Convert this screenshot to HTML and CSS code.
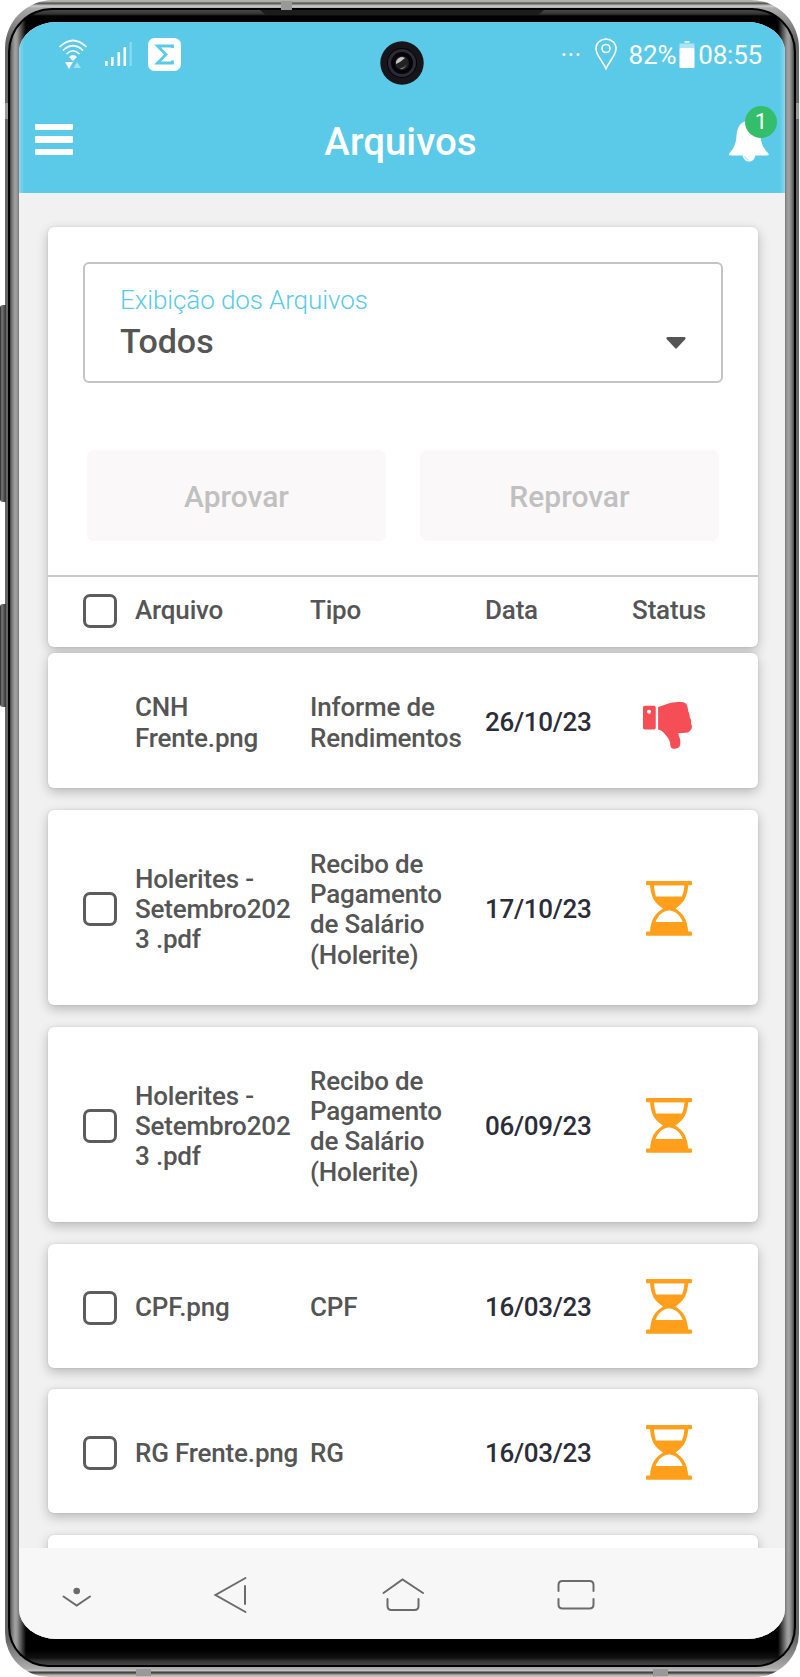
FILE: index.html
```html
<!DOCTYPE html>
<html lang="pt-BR">

<head>
    <meta charset="UTF-8">
    <meta name="viewport" content="width=device-width, initial-scale=1.0">
    <title>Arquivos</title>
    <link rel="stylesheet" href="styles.css">
</head>

<body>
    <!-- Shared icons -->
    <svg class="sprite" width="0" height="0">
        <symbol id="hourglass" viewBox="0 0 46 55">
            <rect x="0" y="0" width="46" height="4.3" rx="1" />
            <rect x="0" y="50.5" width="46" height="4.3" rx="1" />
            <path fill-rule="evenodd" d="M4 3C4.500 15 8 22 17 27.500C8 33 4.500 40 4 52H42.300C41.800 40 38 33 29.500 27.500C38 22 41.800 15 42.300 3ZM8 4.200H38.500Q38 11 36 15.500H10Q8.300 11 8 4.200ZM9.500 41C12 34.500 17 29.500 23 29.500C29 29.500 34.500 34.500 36.800 41Z" />
        </symbol>
        <symbol id="thumb-down" viewBox="0 0 146 140">
            <path fill-rule="evenodd" d="M5 11H33Q38 11 38 16V77Q38 82 33 82H5Q0 82 0 77V16Q0 11 5 11ZM18 23A6 6 0 1 0 18 35A6 6 0 1 0 18 23Z" />
            <path d="M45 15C65 9 78 2 96 1C107 0 120 -1 127 4C132 8 134 19 135 28C139 35 139 42 140 48C144 53 144 59 143 64C149 73 145 84 134 91C125 93 114 92 105 93C106 101 112 108 111 120C112 132 107 139 95 139C83 140 81 133 81 122C78 110 72 103 65 95C59 88 53 83 45 82Z" />
        </symbol>
    </svg>

    <div class="phone">
        <span class="side-btn volume"></span>
        <span class="side-btn power"></span>
        <span class="antenna antenna-top"></span>
        <span class="antenna antenna-left"></span>
        <span class="antenna antenna-right"></span>
        <span class="antenna antenna-bottom-left"></span>
        <span class="antenna antenna-bottom-right"></span>
        <div class="rim">
            <div class="bezel">
                <span class="speaker"></span>
                <div class="screen">
                    <header class="app-header">
                        <div class="status-bar">
                            <svg class="wifi" width="30" height="32" viewBox="0 0 30 32" fill="none" stroke="#fff" stroke-width="1.7">
                                <path d="M1.500 9Q15 -4 28.500 9M5 12.500Q15 3 25 12.500M8.500 16Q15 9.500 21.500 16" />
                                <path d="M11 19Q15 15 19 19L15 23Z" fill="#fff" stroke="none" />
                                <path d="M7 24H15L11 31Z" fill="#fff" stroke="none" />
                                <path d="M15.500 30H23L19 24Z" fill="#fff" stroke="none" opacity=".45" />
                            </svg>
                            <svg class="signal" width="30" height="27" viewBox="0 0 30 27" fill="#fff">
                                <rect x="1" y="20" width="2.600" height="5" />
                                <rect x="7" y="16" width="2.600" height="9" />
                                <rect x="13.500" y="11" width="2.600" height="14" />
                                <rect x="19.500" y="6" width="2.600" height="19" />
                                <rect x="25.500" y="1" width="2.300" height="24" opacity=".3" />
                            </svg>
                            <svg width="33" height="33" viewBox="0 0 33 33">
                                <rect width="33" height="33" rx="6.500" fill="#fff" />
                                <path d="M24.500 10V8H9.500L18 16.500L9.500 25H24.500V22.500" fill="none" stroke="#5acae8" stroke-width="2.800" />
                            </svg>
                            <div class="status-right">
                                <svg class="dots" width="18" height="5" viewBox="0 0 18 5" fill="#fff">
                                    <circle cx="2" cy="2.500" r="1.500" />
                                    <circle cx="9" cy="2.500" r="1.500" />
                                    <circle cx="16" cy="2.500" r="1.500" />
                                </svg>
                                <svg class="pin" width="22" height="32" viewBox="0 0 22 32" fill="none" stroke="#fff" stroke-width="1.600">
                                    <path d="M11 31C8 23 1 18 1 10.500A10 9.500 0 0 1 21 10.500C21 18 14 23 11 31Z" />
                                    <circle cx="11" cy="10.500" r="4" />
                                </svg>
                                <span class="battery-text">82%</span>
                                <svg class="battery" width="16" height="27" viewBox="0 0 16 27" fill="#fff">
                                    <rect x="5.500" y="0" width="5" height="2" opacity=".7" />
                                    <rect x="0.500" y="2.500" width="15" height="5" opacity=".5" />
                                    <rect x="0.500" y="7" width="15" height="20" rx="1" />
                                </svg>
                                <span class="clock">08:55</span>
                            </div>
                        </div>
                        <div class="title-bar">
                            <div class="menu-icon">
                                <span></span>
                                <span></span>
                                <span></span>
                            </div>
                            <h1>Arquivos</h1>
                            <div class="bell">
                                <svg width="42" height="43" viewBox="0 0 42 43" fill="#fff">
                                    <path d="M21 2C11 2 9 10 8.500 17C8 25 5.500 30 1.500 34Q-.5 36.500 3 36.500H14.500Q16 42.500 21 42.500Q26 42.500 27.500 36.500H39Q42 36.500 40 34C36 30 33 25 32.500 17C32 10 30 2 21 2Z" />
                                    <path d="M16.500 37Q18 40.500 20.500 41" fill="none" stroke="#a9e3f3" stroke-width="1" />
                                </svg>
                                <span class="badge">1</span>
                            </div>
                        </div>
                    </header>

                    <main class="content">
                        <section class="card filter-card">
                            <div class="filters">
                                <div class="select">
                                    <div>
                                        <label>Exibição dos Arquivos</label>
                                        <div class="select-value">Todos</div>
                                    </div>
                                    <svg width="20" height="12" viewBox="0 0 20 12">
                                        <path d="M1.500 0H18.500Q20.500 .5 19 2.500L11 11Q10 12 9 11L1 2.500Q-.5 .5 1.500 0Z" fill="#555" />
                                    </svg>
                                </div>
                                <div class="actions">
                                    <button class="btn" disabled>Aprovar</button>
                                    <button class="btn" disabled>Reprovar</button>
                                </div>
                            </div>
                            <div class="row head">
                                <span class="checkbox"></span>
                                <span>Arquivo</span>
                                <span>Tipo</span>
                                <span>Data</span>
                                <span class="status">Status</span>
                            </div>
                        </section>

                        <section class="card row first">
                            <span></span>
                            <span class="file">CNH Frente.png</span>
                            <span class="type">Informe de Rendimentos</span>
                            <span class="date">26/10/23</span>
                            <span class="status"><svg class="rejected" width="49" height="47"><use href="#thumb-down" /></svg></span>
                        </section>

                        <section class="card row tall">
                            <span class="checkbox"></span>
                            <span class="file">Holerites - Setembro2023 .pdf</span>
                            <span class="type">Recibo de Pagamento de Salário (Holerite)</span>
                            <span class="date">17/10/23</span>
                            <span class="status"><svg class="pending" width="46" height="55"><use href="#hourglass" /></svg></span>
                        </section>

                        <section class="card row tall">
                            <span class="checkbox"></span>
                            <span class="file">Holerites - Setembro2023 .pdf</span>
                            <span class="type">Recibo de Pagamento de Salário (Holerite)</span>
                            <span class="date">06/09/23</span>
                            <span class="status"><svg class="pending" width="46" height="55"><use href="#hourglass" /></svg></span>
                        </section>

                        <section class="card row">
                            <span class="checkbox"></span>
                            <span class="file">CPF.png</span>
                            <span class="type">CPF</span>
                            <span class="date">16/03/23</span>
                            <span class="status"><svg class="pending" width="46" height="55"><use href="#hourglass" /></svg></span>
                        </section>

                        <section class="card row">
                            <span class="checkbox"></span>
                            <span class="file">RG Frente.png</span>
                            <span class="type">RG</span>
                            <span class="date">16/03/23</span>
                            <span class="status"><svg class="pending" width="46" height="55"><use href="#hourglass" /></svg></span>
                        </section>

                        <section class="card row"></section>
                    </main>

                    <nav class="nav-bar">
                        <svg width="30" height="40" viewBox="0 0 30 40">
                            <path d="M1.500 21.500L14.700 30.500L28 21.500" />
                            <circle cx="14.700" cy="16" r="3.300" />
                        </svg>
                        <svg width="35" height="40" viewBox="0 0 35 40">
                            <path d="M32.500 3L2.500 20L32.500 37M32 11V29" />
                        </svg>
                        <svg width="43" height="40" viewBox="0 0 43 40">
                            <path d="M1.500 18L20.500 4.500L41 18M5.500 24V31Q5.500 35 9.500 35H32.500Q36.500 35 36.500 31V24" />
                        </svg>
                        <svg width="40" height="40" viewBox="0 0 40 40">
                            <path d="M2.500 16V10Q2.500 6 6.500 6H33.500Q37.500 6 37.500 10V16M2.500 24V29.500Q2.500 33.500 6.500 33.500H33.500Q37.500 33.500 37.500 29.500V24" />
                        </svg>
                    </nav>

                    <svg class="camera" width="44" height="44" viewBox="0 0 44 44">
                        <circle cx="22" cy="22" r="21.700" fill="#15151a" />
                        <circle cx="22" cy="22" r="15" fill="#050507" />
                        <circle cx="22" cy="22" r="12.500" fill="none" stroke="#2c2a38" stroke-width="3" />
                        <circle cx="22" cy="22" r="7" fill="#222" />
                        <path d="M16 23A6 6 0 0 1 25 17L20 21Z" fill="#c4c4c4" />
                        <path d="M21 27Q26 26 27 22Q25 29 20 28Z" fill="#777" />
                    </svg>
                </div>
            </div>
        </div>
    </div>
</body>

</html>
```
FILE: styles.css
```css
* {
    margin: 0;
    padding: 0;
    box-sizing: border-box;
}

body {
    background: #fff;
    font-family: Roboto, "Liberation Sans", sans-serif;
    color: #555;
    height: 1677px;
    overflow: hidden;
}

.sprite {
    display: none;
}

/* Phone body */
.phone {
    position: relative;
    width: 794px;
    height: 1677px;
    margin-left: 5px;
    padding: 8px 3px 10px;
    border-radius: 48px 48px 44px 44px;
    background: linear-gradient(to bottom, #b1b5ab 0, #a9aca3 2px, #444 3px, #777 4px, #d0cdcd 6px, #aaa 8px, #666 40px, #666 1640px, #aaa 1668px, #c5c3c3 1671px, #333 1672px, #777 1674px, #b5b6ac 1675px, #c5c5bd 1677px);
}

.rim {
    height: 100%;
    padding: 2px;
    border-radius: 44px 44px 40px 40px;
    background: #000;
}

.bezel {
    position: relative;
    height: 100%;
    padding: 12px 9px 26px;
    border-radius: 42px 42px 38px 38px;
    background:
        linear-gradient(to right, #444 0, #777 2px, #a2a2a2 5px, #999 7px, #666 10px, rgba(0, 0, 0, 0) 16px),
        linear-gradient(to left, #444 0, #777 2px, #a2a2a2 5px, #999 7px, #666 10px, rgba(0, 0, 0, 0) 16px),
        linear-gradient(to bottom, #484848 0, #333 4px, #000 6px, #000 1640px, #111 1648px, #333 1651px, #444 1655px);
}

.side-btn {
    position: absolute;
    left: -5px;
    width: 6px;
    border-radius: 3px 0 0 3px;
    background: linear-gradient(to right, #222, #777 30%, #555 65%, #333);
}

.volume {
    top: 305px;
    height: 197px;
}

.power {
    top: 604px;
    height: 103px;
}

.antenna {
    position: absolute;
    background: #999;
}

.antenna-top {
    top: 1px;
    left: 276px;
    width: 11px;
    height: 9px;
}

.antenna-left,
.antenna-right {
    top: 103px;
    width: 3px;
    height: 16px;
}

.antenna-left {
    left: 0;
}

.antenna-right {
    right: 0;
}

.antenna-bottom-left,
.antenna-bottom-right {
    bottom: 1px;
    width: 15px;
    height: 7px;
}

.antenna-bottom-left {
    left: 131px;
}

.antenna-bottom-right {
    left: 648px;
}

.speaker {
    position: absolute;
    top: 0;
    left: 250px;
    width: 284px;
    height: 5px;
    background: #1c1c1c;
    clip-path: polygon(0 0, 100% 0, 98% 100%, 2% 100%);
}

/* Screen */
.screen {
    position: relative;
    height: 100%;
    display: flex;
    flex-direction: column;
    overflow: hidden;
    border-radius: 38px / 30px;
    background: #f1f1f1;
}

.camera {
    position: absolute;
    top: 19px;
    left: 361px;
}

.app-header {
    flex: none;
    height: 171px;
    background: #5acae8;
    color: #fff;
    box-shadow: inset 5px 0 4px -3px rgba(255, 255, 255, 0.35), inset -5px 0 4px -3px rgba(255, 255, 255, 0.35);
}

.status-bar {
    display: flex;
    align-items: center;
    height: 64px;
    padding: 0 23px 0 39px;
}

.signal {
    margin: 0 14px 0 16px;
}

.status-right {
    display: flex;
    align-items: center;
    margin-left: auto;
    font-size: 26px;
    line-height: 32px;
    letter-spacing: -0.2px;
}

.status-right span {
    padding-top: 1px;
}

.pin {
    margin: 0 12px 0 15px;
}

.battery {
    margin: 0 3px;
}

.title-bar {
    display: flex;
    align-items: center;
    justify-content: space-between;
    height: 107px;
    padding: 0 15px 0 16px;
}

.title-bar h1 {
    padding-top: 3px;
    font-size: 38.500px;
    font-weight: 500;
}

.menu-icon {
    display: flex;
    flex-direction: column;
    gap: 6px;
    width: 38px;
}

.menu-icon span {
    height: 6.500px;
    border-radius: 1px;
    background: #fff;
}

.bell {
    position: relative;
    width: 42px;
    height: 43px;
    margin-top: 2px;
}

.badge {
    position: absolute;
    top: -13px;
    right: -7px;
    width: 32px;
    height: 32px;
    border-radius: 50%;
    background: #34be6c;
    font-size: 22px;
    line-height: 32px;
    text-align: center;
}

.content {
    flex: 1;
    min-height: 0;
    overflow: hidden;
    display: flex;
    flex-direction: column;
    gap: 21.500px;
    padding: 34px 27px 0 29px;
}

.card {
    flex: none;
    border-radius: 6px;
    background: #fff;
    box-shadow: 0 4px 12px rgba(0, 0, 0, 0.24), 0 0 2px rgba(0, 0, 0, 0.12);
}

.filter-card {
    height: 420px;
}

.filters {
    height: 350px;
    padding: 35px;
    border-bottom: 2px solid #c8c8c8;
}

.select {
    display: flex;
    align-items: flex-end;
    justify-content: space-between;
    height: 121px;
    padding: 21px 35px 32px;
    border: 2px solid #c4c4c4;
    border-radius: 6px;
}

.select label {
    display: block;
    color: #5acae8;
    font-size: 26px;
    font-weight: 300;
    line-height: 32px;
    letter-spacing: -0.1px;
}

.select-value {
    margin-bottom: -17px;
    font-size: 34px;
    font-weight: 500;
    line-height: 50px;
}

.actions {
    display: grid;
    grid-template-columns: 1fr 1fr;
    gap: 34px;
    margin: 67px 4px 0;
}

.btn {
    height: 91px;
    padding-top: 2px;
    border: none;
    border-radius: 7px;
    background: #faf8f9;
    color: #c0c0c0;
    font-family: inherit;
    font-size: 30px;
    font-weight: 500;
}

/* File rows */
.row {
    display: grid;
    grid-template-columns: 52px 175px 175px 146px 76px;
    align-items: center;
    height: 124px;
    padding: 4px 0 0 35px;
    font-size: 26px;
    font-weight: 500;
    line-height: 30.300px;
    letter-spacing: -0.180px;
}

.row .file,
.row .type {
    margin-right: 9px;
    overflow-wrap: anywhere;
}

.row.head {
    height: 66px;
    padding-top: 1px;
}

.row.first {
    height: 135px;
    margin-top: -15.500px;
}

.row.tall {
    height: 195.500px;
}

.row .date {
    color: #2b2d38;
    letter-spacing: -0.300px;
}

.row .status {
    display: flex;
    justify-content: center;
}

.checkbox {
    width: 34px;
    height: 34px;
    border: 3px solid #5c5c5c;
    border-radius: 7px;
}

.pending {
    margin-bottom: 2px;
    fill: #ff9f1c;
}

.rejected {
    margin: 6px 4px 0 0;
    fill: #f64e56;
}

/* Android navigation */
.nav-bar {
    flex: none;
    display: flex;
    align-items: center;
    height: 91px;
    padding: 3px 0 0 43px;
    background: #f7f7f7;
}

.nav-bar svg {
    fill: none;
    stroke: #6b6b6b;
    stroke-width: 2;
    stroke-linecap: round;
}

.nav-bar circle {
    fill: #6b6b6b;
    stroke: none;
}

.nav-bar svg:nth-child(2) {
    margin-left: 121px;
}

.nav-bar svg:nth-child(3) {
    margin-left: 134px;
}

.nav-bar svg:nth-child(4) {
    margin-left: 131px;
}
```
